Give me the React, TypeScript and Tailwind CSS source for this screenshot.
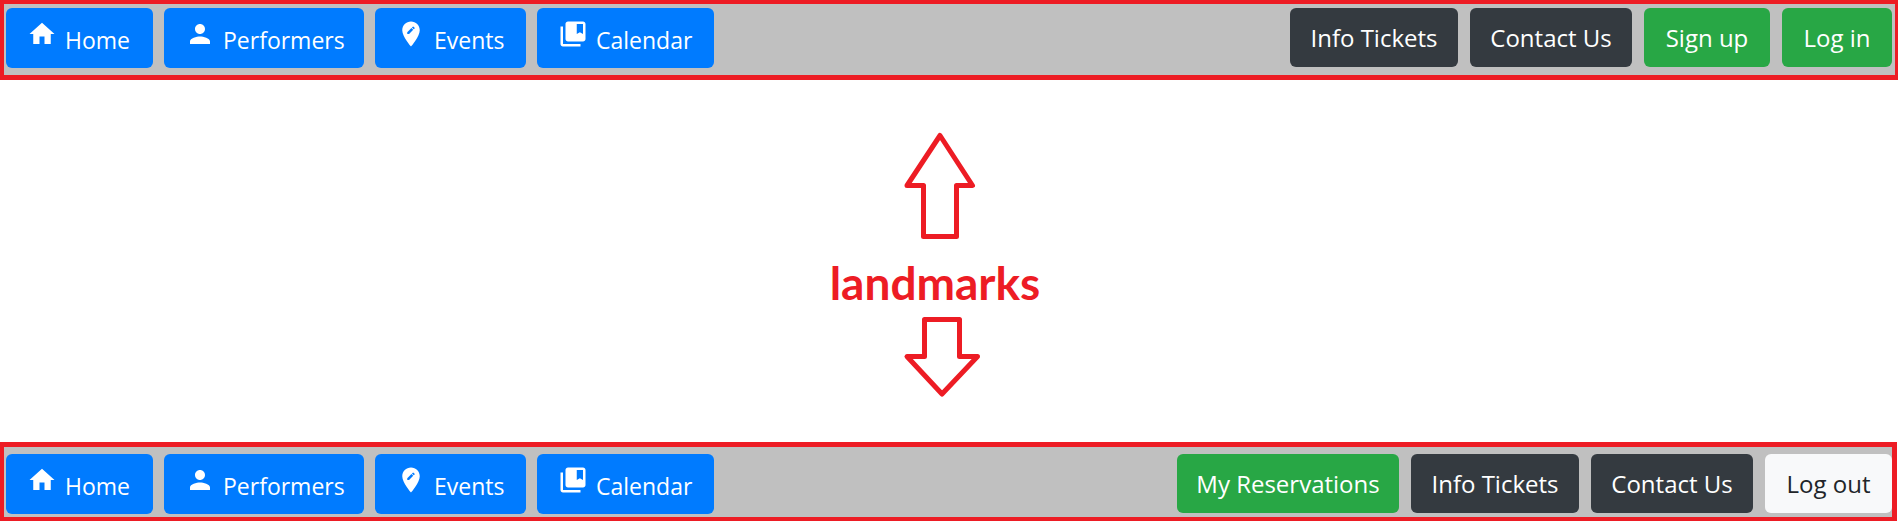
import type { ReactNode } from "react";
import {
  MdCollectionsBookmark,
  MdEditLocation,
  MdHome,
  MdPerson,
} from "react-icons/md";

const tones = {
  dark: "bg-[#343a40] text-white",
  green: "bg-[#28a745] text-white",
  light: "bg-[#f8f9fa] text-[#212529]",
};

type Action = { label: string; tone: keyof typeof tones; width: string };

const sections = [
  { label: "Home", icon: <MdHome size={30} />, width: "w-[147px]" },
  { label: "Performers", icon: <MdPerson size={30} />, width: "w-[200px]" },
  { label: "Events", icon: <MdEditLocation size={30} />, width: "w-[151px]" },
  { label: "Calendar", icon: <MdCollectionsBookmark size={30} />, width: "w-[177px]" },
];

const guestActions: Action[] = [
  { label: "Info Tickets", tone: "dark", width: "w-[168px]" },
  { label: "Contact Us", tone: "dark", width: "w-[162px]" },
  { label: "Sign up", tone: "green", width: "w-[126px]" },
  { label: "Log in", tone: "green", width: "w-[110px]" },
];

const memberActions: Action[] = [
  { label: "My Reservations", tone: "green", width: "w-[222px]" },
  { label: "Info Tickets", tone: "dark", width: "w-[168px]" },
  { label: "Contact Us", tone: "dark", width: "w-[162px]" },
  { label: "Log out", tone: "light", width: "w-[127px]" },
];

function SectionButton({ icon, width, children }: { icon: ReactNode; width: string; children: ReactNode }) {
  return (
    <button
      type="button"
      className={`flex h-[60px] items-start gap-2 rounded-md bg-[#007bff] pt-[11px] pl-[21px] text-[23px] whitespace-nowrap text-white ${width}`}
    >
      <span aria-hidden="true">{icon}</span>
      <span className="pt-1 leading-[34px]">{children}</span>
    </button>
  );
}

function NavBar({ label, actions, className }: { label: string; actions: Action[]; className: string }) {
  return (
    <nav
      aria-label={label}
      className={`flex items-start justify-between border-[#ed1c24] bg-[#c0c0c0] pl-[2px] font-['Open_Sans',sans-serif] ${className}`}
    >
      <div className="flex gap-[11px]">
        {sections.map((s) => (
          <SectionButton key={s.label} icon={s.icon} width={s.width}>
            {s.label}
          </SectionButton>
        ))}
      </div>
      <div className="flex gap-3">
        {actions.map((a) => (
          <button
            key={a.label}
            type="button"
            className={`h-[59px] rounded-md pt-px text-center text-[24px] leading-[34px] whitespace-nowrap ${tones[a.tone]} ${a.width}`}
          >
            {a.label}
          </button>
        ))}
      </div>
    </nav>
  );
}

export default function App() {
  return (
    <div className="bg-white">
      <NavBar
        label="Guest"
        actions={guestActions}
        className="h-20 border-t-4 border-r-[3px] border-b-[5px] border-l-4 pt-1 pr-[3px]"
      />
      <main className="flex h-[362px] flex-col items-center pt-[50px] pr-7 text-[#ed1c24]">
        <svg width="206" height="110" viewBox="0 0 206 110" fill="none" stroke="currentColor" strokeWidth="5" strokeLinejoin="round" aria-hidden="true">
          <path d="M108 5.500 L140.500 55.500 H124.500 V106.500 H91.500 V55.500 H75 Z" />
        </svg>
        <h1 className="pt-3 font-['Lato',sans-serif] text-[46px] leading-[62px] font-bold">landmarks</h1>
        <svg width="206" height="84" viewBox="0 -2 206 84" fill="none" stroke="currentColor" strokeWidth="5" strokeLinejoin="round" aria-hidden="true">
          <path d="M92.500 3.500 H127.500 V40.500 H145.500 L110 78 L75 40.500 H92.500 Z" />
        </svg>
      </main>
      <NavBar
        label="Member"
        actions={memberActions}
        className="mr-px h-[79px] border-t-[5px] border-r-[5px] border-b-4 border-l-4 pt-[7px]"
      />
    </div>
  );
}
